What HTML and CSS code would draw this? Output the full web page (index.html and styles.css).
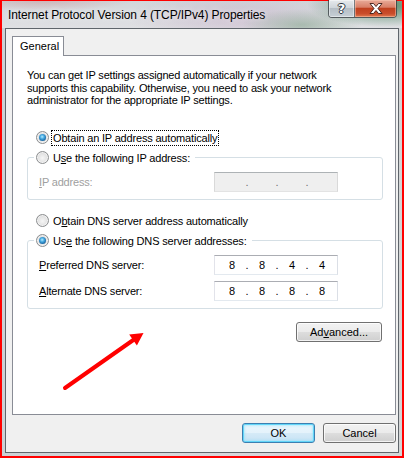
FILE: index.html
```html
<!DOCTYPE html>
<html>
<head>
<meta charset="utf-8">
<link rel="stylesheet" href="styles.css">
</head>
<body>
<div class="window">
  <div class="titlebar">
    <div class="title">Internet Protocol Version 4 (TCP/IPv4) Properties</div>
    <div class="caption-btns">
      <div class="cbtn help">?</div>
      <div class="cbtn close">
        <svg width="14" height="11" viewBox="0 0 14 11"><path d="M1 0.5 H4.5 L7 3.5 L9.5 0.5 H13 L9 5.5 L13 10.5 H9.5 L7 7.5 L4.5 10.5 H1 L5 5.5 Z" fill="#fff" stroke="#3a1a14" stroke-width="0.9" stroke-linejoin="round"/></svg>
      </div>
    </div>
  </div>
  <div class="client">
    <div class="tabs"><div class="tab">General</div></div>
    <div class="page">
      <p class="desc">You can get IP settings assigned automatically if your network<br>supports this capability. Otherwise, you need to ask your network<br>administrator for the appropriate IP settings.</p>
      <div class="opt opt-first"><span class="radio on"></span><span class="lbl focus">Obtain an IP address automatically</span></div>
      <fieldset class="group group-ip">
        <legend><span class="radio"></span><span class="lbl">U<u>s</u>e the following IP address:</span></legend>
        <div class="field-row">
          <span class="flabel disabled"><u>I</u>P address:</span>
          <div class="ipbox dis"><span class="oct"></span><span class="dot">.</span><span class="oct"></span><span class="dot">.</span><span class="oct"></span><span class="dot">.</span><span class="oct"></span></div>
        </div>
      </fieldset>
      <div class="opt opt-dns"><span class="radio"></span><span class="lbl">O<u>b</u>tain DNS server address automatically</span></div>
      <fieldset class="group group-dns">
        <legend><span class="radio on"></span><span class="lbl">Us<u>e</u> the following DNS server addresses:</span></legend>
        <div class="field-row">
          <span class="flabel"><u>P</u>referred DNS server:</span>
          <div class="ipbox"><span class="oct">8</span><span class="dot">.</span><span class="oct">8</span><span class="dot">.</span><span class="oct">4</span><span class="dot">.</span><span class="oct">4</span></div>
        </div>
        <div class="field-row">
          <span class="flabel"><u>A</u>lternate DNS server:</span>
          <div class="ipbox"><span class="oct">8</span><span class="dot">.</span><span class="oct">8</span><span class="dot">.</span><span class="oct">8</span><span class="dot">.</span><span class="oct">8</span></div>
        </div>
      </fieldset>
      <div class="adv-row"><button class="btn adv">Ad<u>v</u>anced...</button></div>
    </div>
    <div class="footer">
      <button class="btn default">OK</button>
      <button class="btn">Cancel</button>
    </div>
  </div>
</div>
<svg class="arrow" width="404" height="458" viewBox="0 0 404 458">
  <line x1="65" y1="388" x2="134" y2="339.5" stroke="#f00" stroke-width="4" stroke-linecap="round"/>
  <polygon points="143.5,333 129.2,334.6 136.9,345.4" fill="#f00"/>
</svg>
</body>
</html>
```

FILE: styles.css
```css
html, body {
  margin: 0;
  padding: 0;
}
body {
  width: 404px;
  height: 458px;
  overflow: hidden;
  position: relative;
  font-family: "Liberation Sans", Arial, sans-serif;
  font-size: 11px;
  letter-spacing: -0.18px;
  color: #000;
}
.window {
  box-sizing: border-box;
  width: 404px;
  height: 458px;
  border: 2px solid #f00;
  border-top-width: 1px;
  padding: 0 3px 3px;
  display: flex;
  flex-direction: column;
  background: linear-gradient(to right, #ccd0d4 0%, #d6d8db 40%, #d9d3d9 70%, #d3d6d6 100%);
}
.titlebar {
  height: 27px;
  margin: 0 -3px;
  padding: 0 0 0 6px;
  display: flex;
  justify-content: space-between;
  align-items: flex-start;
  background:
    radial-gradient(ellipse 80px 22px at 385px 4px, rgba(70,130,90,0.85), rgba(70,130,90,0) 100%),
    radial-gradient(ellipse 60px 16px at 300px 24px, rgba(120,160,130,0.5), rgba(120,160,130,0) 100%),
    radial-gradient(ellipse 110px 26px at 235px 16px, rgba(196,170,198,0.5), rgba(196,170,198,0) 100%),
    radial-gradient(ellipse 90px 10px at 40px 0px, rgba(200,120,120,0.35), rgba(200,120,120,0) 100%),
    linear-gradient(to bottom, #d2d6da 0%, #dfe0e3 100%);
}
.title {
  font-size: 12px;
  letter-spacing: -0.1px;
  line-height: 14px;
  margin-top: 7px;
  color: #000;
  text-shadow: 0 0 6px rgba(255,255,255,0.9);
}
.caption-btns {
  display: flex;
  margin-top: -1px;
  margin-right: 5px;
  height: 18px;
  border: 1px solid rgba(50,55,60,0.75);
  border-top: none;
  border-radius: 0 0 4px 4px;
  overflow: hidden;
  box-sizing: border-box;
}
.cbtn {
  height: 17px;
  display: flex;
  align-items: center;
  justify-content: center;
  box-sizing: border-box;
}
.help {
  width: 26px;
  border-right: 1px solid rgba(50,55,60,0.6);
  background: linear-gradient(to bottom, #e6eaed 0%, #cfd5da 45%, #b5bec5 50%, #c7d0d6 100%);
  box-shadow: inset 0 0 0 1px rgba(255,255,255,0.45);
  color: #fff;
  font-family: "DejaVu Sans", sans-serif;
  font-weight: bold;
  font-size: 13px;
  letter-spacing: 0;
  line-height: 17px;
  text-shadow: 1px 0 0 #2e3740, -1px 0 0 #2e3740, 0 1px 0 #2e3740, 0 -1px 0 #2e3740;
}
.close {
  width: 41px;
  background: linear-gradient(to bottom, #e8ab99 0%, #d98068 42%, #c0411f 50%, #c94d2b 80%, #e07a50 100%);
  box-shadow: inset 0 0 0 1px rgba(255,210,190,0.45);
}
.close svg {
  display: block;
}
.client {
  flex: 1;
  background: #f0f0f0;
  border: 1px solid #5f656b;
  padding: 7px 1px 0 6px;
  display: flex;
  flex-direction: column;
}
.tabs {
  display: flex;
}
.tab {
  box-sizing: border-box;
  width: 52px;
  height: 20px;
  margin-bottom: -1px;
  padding: 0 0 0 7px;
  border: 1px solid #898c95;
  border-bottom: none;
  background: #fff;
  line-height: 19px;
  letter-spacing: 0;
  position: relative;
  z-index: 1;
}
.page {
  box-sizing: border-box;
  width: 384px;
  height: 360px;
  border: 1px solid #898c95;
  background: #fff;
  padding: 13px 12px 0 14px;
  display: flex;
  flex-direction: column;
}
.desc {
  margin: 0;
  line-height: 12.6px;
}
.opt {
  display: flex;
  align-items: center;
  height: 16px;
  padding-left: 9px;
}
.opt-first {
  margin-top: 23px;
}
.opt-dns {
  margin-top: 13px;
}
.radio {
  box-sizing: border-box;
  width: 13px;
  height: 13px;
  border-radius: 50%;
  border: 1px solid #8c8e90;
  background: radial-gradient(circle at 50% 55%, #f6f6f6 0%, #e2e2e2 55%, #c4c4c4 100%);
  box-shadow: inset 0 0 0 1px rgba(255,255,255,0.6);
  position: relative;
  flex: none;
  margin-right: 2px;
}
.radio.on::after {
  content: "";
  position: absolute;
  left: 2px;
  top: 2px;
  width: 7px;
  height: 7px;
  border-radius: 50%;
  background: radial-gradient(circle at 45% 40%, #b5ecff 0%, #47a9e0 35%, #1b6aa6 70%, #0b3f6a 100%);
}
.lbl {
  border: 1px solid transparent;
  padding: 0 1px 0 1px;
  line-height: 14px;
  white-space: nowrap;
}
.lbl.focus {
  border: 1px dotted #000;
}
.group {
  margin: 4px 0 0;
  border: 1px solid #d5dfe5;
  border-radius: 3px;
  padding: 6px 11px 7px 11px;
  min-inline-size: 0;
  display: flex;
  flex-direction: column;
  gap: 6px;
}
.group legend {
  display: flex;
  align-items: center;
  height: 16px;
  padding: 0 3px 0 2px;
  margin-left: -5px;
}
.field-row {
  display: grid;
  grid-template-columns: 175px 124px;
  align-items: center;
  height: 20px;
}
.flabel {
  line-height: 14px;
}
.flabel.disabled {
  color: #a0a0a0;
}
.ipbox {
  box-sizing: border-box;
  width: 124px;
  height: 20px;
  border: 1px solid;
  border-color: #abadb3 #dbdfe6 #e3e9ef #e2e3ea;
  background: #fff;
  display: flex;
  align-items: center;
  padding-left: 5px;
  line-height: 14px;
  letter-spacing: 0;
}
.ipbox.dis {
  background: #efefef;
  border-color: #adb2b5 #d9d9d9 #e3e3e3 #d9d9d9;
  color: #707070;
}
.oct {
  width: 24px;
  text-align: center;
}
.dot {
  width: 6px;
  text-align: center;
}
.adv-row {
  display: flex;
  justify-content: flex-end;
  margin-top: 13px;
  padding-right: 1px;
}
.btn {
  font: inherit;
  letter-spacing: 0;
  color: #000;
  box-sizing: border-box;
  width: 73px;
  height: 20px;
  padding: 0;
  border: 1px solid #707070;
  border-radius: 3px;
  background: linear-gradient(to bottom, #f2f2f2 0%, #ebebeb 48%, #dddddd 52%, #cfcfcf 100%);
  box-shadow: inset 0 0 0 1px rgba(255,255,255,0.75);
  line-height: 16px;
}
.btn.adv {
  width: 86px;
}
.btn.default {
  border-color: #3c7fb1;
  box-shadow: inset 0 0 0 1px #62d5f8, inset 0 0 2px 2px rgba(140,225,250,0.5);
  background: linear-gradient(to bottom, #eaf6fd 0%, #e4f2fb 48%, #d5eaf7 52%, #c6e2f5 100%);
}
.footer {
  display: flex;
  justify-content: flex-end;
  gap: 8px;
  margin-top: 8px;
  padding-right: 1px;
}
.arrow {
  position: absolute;
  left: 0;
  top: 0;
  pointer-events: none;
}
```
